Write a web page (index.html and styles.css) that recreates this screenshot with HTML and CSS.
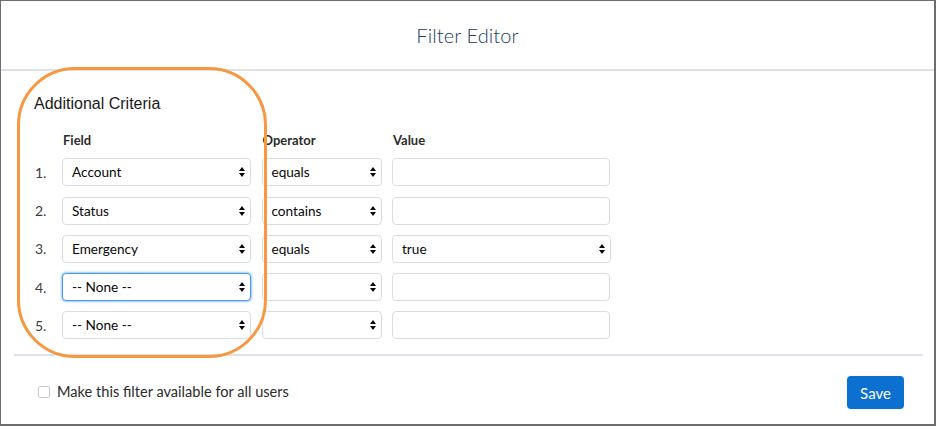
FILE: index.html
```html
<!DOCTYPE html>
<html lang="en">
<head>
<meta charset="utf-8">
<title>Filter Editor</title>
<link rel="stylesheet" href="styles.css">
</head>
<body>
<div class="frame">
  <header class="head">
    <h1 class="title">Filter Editor</h1>
  </header>
  <main class="content">
    <h2 class="section">Additional Criteria</h2>
    <div class="grid">
      <span></span>
      <span class="colh">Field</span>
      <span class="colh">Operator</span>
      <span class="colh">Value</span>

      <span class="num">1.</span>
      <div class="select"><span>Account</span><svg class="arr" viewBox="0 0 6 10" width="6" height="10"><polygon points="3,0 6,4 0,4"/><polygon points="0,6 6,6 3,10"/></svg></div>
      <div class="select"><span>equals</span><svg class="arr" viewBox="0 0 6 10" width="6" height="10"><polygon points="3,0 6,4 0,4"/><polygon points="0,6 6,6 3,10"/></svg></div>
      <div class="input"></div>

      <span class="num">2.</span>
      <div class="select"><span>Status</span><svg class="arr" viewBox="0 0 6 10" width="6" height="10"><polygon points="3,0 6,4 0,4"/><polygon points="0,6 6,6 3,10"/></svg></div>
      <div class="select"><span>contains</span><svg class="arr" viewBox="0 0 6 10" width="6" height="10"><polygon points="3,0 6,4 0,4"/><polygon points="0,6 6,6 3,10"/></svg></div>
      <div class="input"></div>

      <span class="num">3.</span>
      <div class="select"><span>Emergency</span><svg class="arr" viewBox="0 0 6 10" width="6" height="10"><polygon points="3,0 6,4 0,4"/><polygon points="0,6 6,6 3,10"/></svg></div>
      <div class="select"><span>equals</span><svg class="arr" viewBox="0 0 6 10" width="6" height="10"><polygon points="3,0 6,4 0,4"/><polygon points="0,6 6,6 3,10"/></svg></div>
      <div class="select wide"><span>true</span><svg class="arr" viewBox="0 0 6 10" width="6" height="10"><polygon points="3,0 6,4 0,4"/><polygon points="0,6 6,6 3,10"/></svg></div>

      <span class="num">4.</span>
      <div class="select focus"><span>-- None --</span><svg class="arr" viewBox="0 0 6 10" width="6" height="10"><polygon points="3,0 6,4 0,4"/><polygon points="0,6 6,6 3,10"/></svg></div>
      <div class="select"><span></span><svg class="arr" viewBox="0 0 6 10" width="6" height="10"><polygon points="3,0 6,4 0,4"/><polygon points="0,6 6,6 3,10"/></svg></div>
      <div class="input"></div>

      <span class="num">5.</span>
      <div class="select"><span>-- None --</span><svg class="arr" viewBox="0 0 6 10" width="6" height="10"><polygon points="3,0 6,4 0,4"/><polygon points="0,6 6,6 3,10"/></svg></div>
      <div class="select"><span></span><svg class="arr" viewBox="0 0 6 10" width="6" height="10"><polygon points="3,0 6,4 0,4"/><polygon points="0,6 6,6 3,10"/></svg></div>
      <div class="input"></div>
    </div>
  </main>
  <footer class="foot">
    <label class="check"><span class="box"></span><span>Make this filter available for all users</span></label>
    <button class="save" type="button">Save</button>
  </footer>
  <div class="annot"></div>
</div>
</body>
</html>
```

FILE: styles.css
```css
* { box-sizing: border-box; }
html, body { margin: 0; padding: 0; background: #ffffff; }
body { font-family: Lato, "Open Sans", Arial, sans-serif; color: #080707; }

.frame {
  position: relative;
  width: 936px;
  height: 426px;
  border: 1px solid #6d6d6d;
  border-right-width: 2px;
  border-bottom-width: 2px;
  background: #ffffff;
  overflow: hidden;
}

.head {
  height: 70px;
  border-bottom: 2px solid #dde1e9;
  display: flex;
  align-items: center;
  justify-content: center;
  padding-top: 0;
}
.title {
  margin: 0;
  font-family: Lato, "Open Sans", sans-serif;
  font-weight: 300;
  font-size: 20px;
  color: #233a60;
  letter-spacing: 0.1px;
}

.content {
  height: 283px;
  padding: 23px 0 0 32px;
  overflow: hidden;
}
.section {
  margin: 0 0 0 1px;
  font-family: "Liberation Sans", Arial, sans-serif;
  font-weight: 400;
  font-size: 16px;
  line-height: 20px;
  color: #1a1a1a;
}

.grid {
  margin-top: 18px;
  display: grid;
  grid-template-columns: 18.5px 189px 120px 218px;
  grid-auto-rows: 28px;
  grid-template-rows: 16px;
  column-gap: 10.5px;
  row-gap: 10.3px;
  align-items: center;
}
.colh {
  font-weight: 700;
  font-size: 13px;
  line-height: 16px;
  color: #2b2b2b;
  padding-left: 1px;
  align-self: start;
}
.num {
  font-size: 14px;
  color: #3e3e3c;
  padding-left: 2px;
}
.select, .input {
  height: 28px;
  border: 1px solid #d8dde6;
  border-radius: 4px;
  background: #ffffff;
}
.select {
  display: flex;
  align-items: center;
  justify-content: space-between;
  padding: 0 5px 0 9px;
  font-size: 13.6px;
  color: #080707;
}
.select.wide { width: 219px; }
.select.focus {
  border-color: #4b9cf0;
  box-shadow: 0 0 2px 1px #9ac8f7;
}
.arr { fill: #080707; flex: none; }

.foot {
  margin: 0 11px 0 13px;
  border-top: 2px solid #dde1e9;
  display: flex;
  justify-content: space-between;
  align-items: center;
  padding: 20px 19px 0 24px;
}
.check {
  display: flex;
  align-items: center;
  gap: 7px;
  font-size: 14.6px;
  color: #2b2b2b;
  margin-top: -2px;
}
.box {
  width: 12px;
  height: 12px;
  border: 1px solid #c9c9c9;
  border-radius: 2px;
  background: #fff;
}
.save {
  width: 57px;
  height: 33px;
  border: 0;
  border-radius: 4px;
  background: #0b70d0;
  color: #ffffff;
  font-family: Lato, "Open Sans", sans-serif;
  font-size: 15px;
  padding: 0;
}

.annot {
  position: absolute;
  left: 16px;
  top: 66px;
  width: 250px;
  height: 291px;
  border: 3px solid #f7973f;
  border-radius: 58px;
  pointer-events: none;
}
```
